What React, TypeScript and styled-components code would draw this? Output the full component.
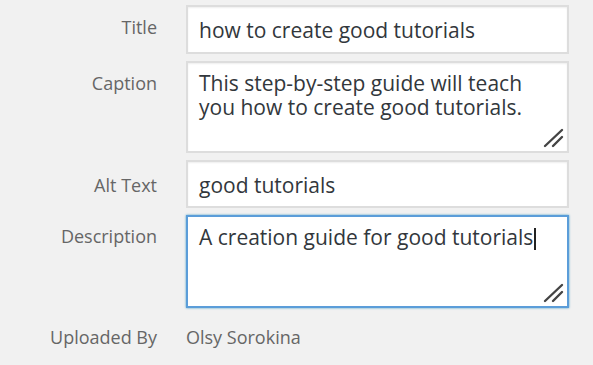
import React from "react";
import styled, { createGlobalStyle } from "styled-components";

const Global = createGlobalStyle`
  html, body { margin: 0; padding: 0; background: #f1f1f1; }
  body { font-family: "Open Sans", "Noto Sans", sans-serif; }
`;

const Form = styled.div`
  display: grid;
  grid-template-columns: 157px 383px;
  align-content: start;
  column-gap: 29px;
  row-gap: 7px;
  padding-top: 5px;
  width: 593px;
  min-height: 365px;
  box-sizing: border-box;
`;

const Label = styled.label<{ $top: number }>`
  justify-self: end;
  padding-top: ${(p) => p.$top}px;
  font-size: 18px;
  line-height: 24px;
  color: #666;
`;

const Field = styled.div<{ $h: number; $focus?: boolean; $multi?: boolean }>`
  position: relative;
  box-sizing: border-box;
  height: ${(p) => p.$h}px;
  background: #fff;
  border: 2px solid ${(p) => (p.$focus ? "#5b9dd9" : "#ddd")};
  box-shadow: ${(p) =>
    p.$focus ? "0 0 2px rgba(30,140,190,.8)" : "inset 0 1px 2px rgba(0,0,0,.07)"};
  padding: ${(p) => (p.$multi ? "8px 11px" : "11px 11px")};
  font-size: 21px;
  line-height: 24px;
  color: #32373c;
  white-space: pre-wrap;
`;

const Caret = styled.span`
  display: inline-block;
  width: 2px;
  height: 22px;
  background: #222;
  vertical-align: -5px;
  margin-left: 1px;
`;

const Grip = styled.svg`
  position: absolute;
  right: 2px;
  bottom: 3px;
  width: 22px;
  height: 20px;
`;

const Value = styled.div`
  font-size: 18px;
  line-height: 24px;
  color: #666;
  padding-top: 10px;
`;

const ResizeGrip = () => (
  <Grip viewBox="0 0 22 20">
    <path d="M2 18 L19 2" stroke="#444" strokeWidth="2.4" strokeLinecap="round" />
    <path d="M10 18 L19 9" stroke="#444" strokeWidth="2.4" strokeLinecap="round" />
  </Grip>
);

export default function App() {
  return (
    <>
      <Global />
      <Form>
        <Label $top={10}>Title</Label>
        <Field $h={49}>how to create good tutorials</Field>

        <Label $top={10}>Caption</Label>
        <Field $h={92} $multi>
          {"This step-by-step guide will teach\nyou how to create good tutorials."}
          <ResizeGrip />
        </Field>

        <Label $top={13}>Alt Text</Label>
        <Field $h={48}>good tutorials</Field>

        <Label $top={9}>Description</Label>
        <Field $h={93} $multi $focus>
          A creation guide for good tutorials<Caret />
          <ResizeGrip />
        </Field>

        <Label $top={10}>Uploaded By</Label>
        <Value>Olsy Sorokina</Value>
      </Form>
    </>
  );
}
